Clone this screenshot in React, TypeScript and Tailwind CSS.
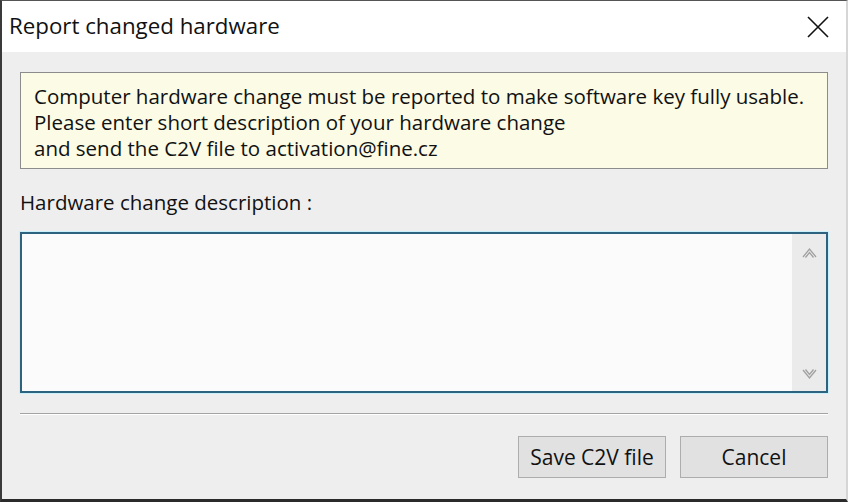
export default function App() {
  const font = { fontFamily: '"Open Sans", "Noto Sans", sans-serif' };
  return (
    <div
      className="w-[848px] h-[502px] flex flex-col bg-[#efeeee] border-l-2 border-t border-b-[3px] border-r-2 border-l-[#3a3a3a] border-t-[#555] border-b-[#2a2a2a] border-r-[#d6d6d6] text-[#111]"
      style={font}
    >
      {/* title bar */}
      <div className="h-[51px] bg-white flex items-center justify-between pl-[7px] pr-[17px]">
        <span className="text-[22.3px] leading-none pb-[1px]">Report changed hardware</span>
        <svg width="22" height="22" viewBox="0 0 22 22" className="mt-[1px]">
          <path d="M1 1 L21 21 M21 1 L1 21" stroke="#111" strokeWidth="1.6" fill="none" />
        </svg>
      </div>

      <div className="flex-1 flex flex-col pl-[18px] pr-[18px]">
        <div className="mt-[20px] h-[97px] border border-[#8c8c8c] bg-[#fbfbe6] pl-[13px] pt-[10px] text-[20.5px] leading-[26px]">
          <div>Computer hardware change must be reported to make software key fully usable.</div>
          <div>Please enter short description of your hardware change</div>
          <div>and send the C2V file to activation@fine.cz</div>
        </div>

        <div className="mt-[20px] text-[20.5px] leading-[26px]">Hardware change description :</div>

        <div className="mt-[17px] h-[161px] border-2 border-[#2d637f] shadow-[0_0_0_1px_#c9f0fb] bg-[#fbfbfb] flex justify-end">
          <div className="w-[34px] bg-[#ebebeb] flex flex-col items-center justify-between pt-[13px] pb-[11px]">
            <svg width="15" height="11" viewBox="0 0 15 11">
              <path d="M1 10 L7.5 2 L14 10 M3.5 10.5 L7.5 5.5 L11.5 10.5" stroke="#a0a0a0" strokeWidth="1.3" fill="none" />
            </svg>
            <svg width="15" height="11" viewBox="0 0 15 11">
              <path d="M1 1 L7.5 9 L14 1 M3.5 0.5 L7.5 5.5 L11.5 0.5" stroke="#a0a0a0" strokeWidth="1.3" fill="none" />
            </svg>
          </div>
        </div>

        <div className="mt-[20px] h-[2px] border-t border-t-[#a3a3a3] border-b border-b-white" />

        <div className="mt-[21px] flex justify-end gap-[14px]">
          <button className="w-[148px] h-[42px] border border-[#adadad] bg-[#e1e1e1] text-[21px] text-[#111] pt-[2px]">
            Save C2V file
          </button>
          <button className="w-[148px] h-[42px] border border-[#adadad] bg-[#e1e1e1] text-[21px] text-[#111] pt-[2px]">
            Cancel
          </button>
        </div>
      </div>
    </div>
  );
}
